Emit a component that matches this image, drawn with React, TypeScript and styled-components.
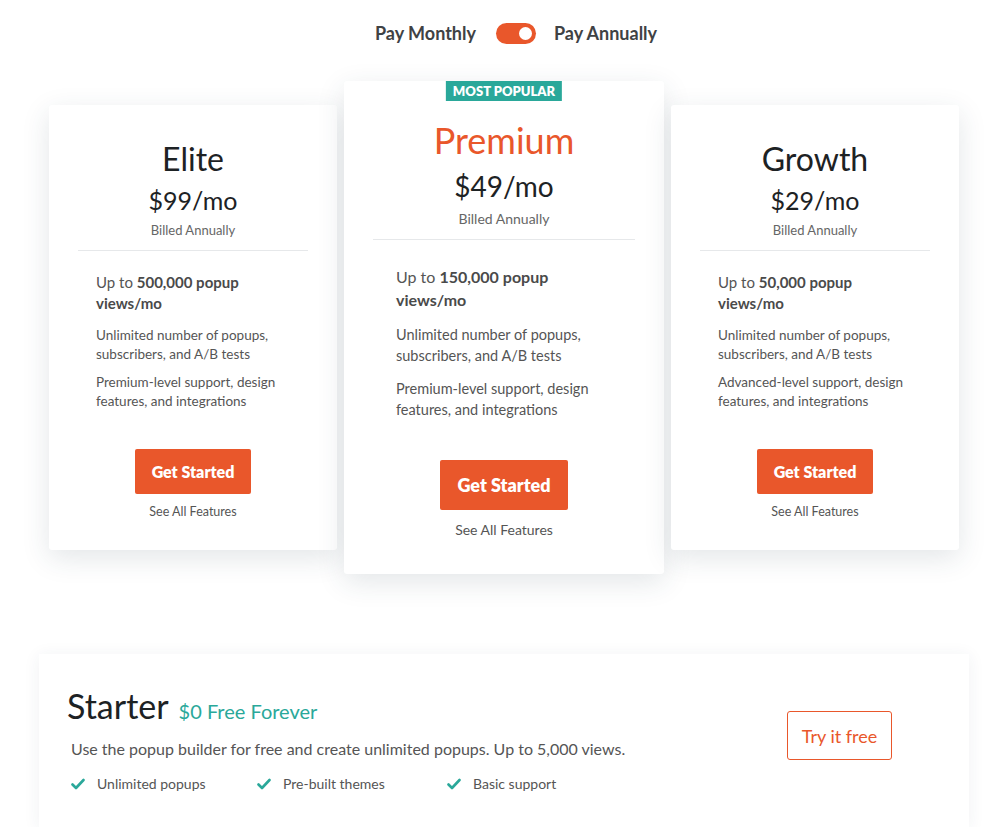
import React, { useState } from 'react';
import styled, { createGlobalStyle } from 'styled-components';

const GlobalStyle = createGlobalStyle`
  body {
    margin: 0;
    background: #fff;
    font-family: 'Lato', 'Open Sans', sans-serif;
    color: #222;
  }
`;

const ORANGE = '#e9572b';
const TEAL = '#2aa89a';

interface Plan {
  name: string;
  price: string;
  views: string;
  support: string;
  featured?: boolean;
}

const plans: Plan[] = [
  { name: 'Elite', price: '$99/mo', views: '500,000', support: 'Premium-level' },
  { name: 'Premium', price: '$49/mo', views: '150,000', support: 'Premium-level', featured: true },
  { name: 'Growth', price: '$29/mo', views: '50,000', support: 'Advanced-level' },
];

const CheckIcon = () => (
  <svg width="14" height="12" viewBox="0 0 14 12">
    <path d="M1.5 6.5 L5 10 L12.5 2" fill="none" stroke={TEAL} strokeWidth="2.6" strokeLinecap="round" strokeLinejoin="round" />
  </svg>
);

const App = () => {
  const [annual, setAnnual] = useState(true);

  return (
    <Page>
      <GlobalStyle />
      <ToggleRow>
        <ToggleLabel>Pay Monthly</ToggleLabel>
        <Switch $on={annual} onClick={() => setAnnual(!annual)}>
          <Knob $on={annual} />
        </Switch>
        <ToggleLabel>Pay Annually</ToggleLabel>
      </ToggleRow>

      <CardRow>
        {plans.map((p) => (
          <Card key={p.name} $featured={p.featured}>
            {p.featured && <Badge>MOST POPULAR</Badge>}
            <PlanName $featured={p.featured}>{p.name}</PlanName>
            <Price $featured={p.featured}>{p.price}</Price>
            <Billed $featured={p.featured}>Billed Annually</Billed>
            <Divider />
            <Features $featured={p.featured}>
              <Views $featured={p.featured}>
                Up to <b>{p.views} popup views/mo</b>
              </Views>
              <Feature $featured={p.featured}>Unlimited number of popups, subscribers, and A/B tests</Feature>
              <Feature $featured={p.featured}>{p.support} support, design features, and integrations</Feature>
            </Features>
            <StartButton $featured={p.featured}>Get Started</StartButton>
            <SeeAll $featured={p.featured}>See All Features</SeeAll>
          </Card>
        ))}
      </CardRow>

      <StarterCard>
        <StarterInfo>
          <StarterTitle>
            Starter <Free>$0 Free Forever</Free>
          </StarterTitle>
          <StarterText>Use the popup builder for free and create unlimited popups. Up to 5,000 views.</StarterText>
          <CheckList>
            <CheckItem $w={186}>
              <CheckIcon /> Unlimited popups
            </CheckItem>
            <CheckItem $w={190}>
              <CheckIcon /> Pre-built themes
            </CheckItem>
            <CheckItem $w={140}>
              <CheckIcon /> Basic support
            </CheckItem>
          </CheckList>
        </StarterInfo>
        <TryButton>Try it free</TryButton>
      </StarterCard>
    </Page>
  );
};

export default App;

const Page = styled.div`
  width: 1007px;
  padding-top: 22px;
  display: flex;
  flex-direction: column;
  align-items: center;
`;

const ToggleRow = styled.div`
  display: flex;
  align-items: center;
  height: 22px;
  margin-left: 25px;
`;

const ToggleLabel = styled.span`
  font-size: 18px;
  font-weight: 700;
  color: #3f4244;
`;

const Switch = styled.button<{ $on: boolean }>`
  width: 40px;
  height: 21px;
  margin: 0 18px 0 20px;
  border-radius: 11px;
  border: none;
  padding: 0;
  background: ${(p) => (p.$on ? ORANGE : '#ccc')};
  position: relative;
  cursor: pointer;
`;

const Knob = styled.span<{ $on: boolean }>`
  position: absolute;
  top: 4px;
  left: ${(p) => (p.$on ? '23px' : '4px')};
  width: 13px;
  height: 13px;
  border-radius: 50%;
  background: #fff;
`;

const CardRow = styled.div`
  display: flex;
  align-items: center;
  gap: 7px;
  margin-top: 37px;
  margin-left: 1px;
`;

const Card = styled.div<{ $featured?: boolean }>`
  position: relative;
  box-sizing: border-box;
  width: ${(p) => (p.$featured ? '320px' : '288px')};
  height: ${(p) => (p.$featured ? '493px' : '445px')};
  padding: ${(p) => (p.$featured ? '37px 0 0' : '34px 0 0')};
  background: #fff;
  border-radius: 3px;
  box-shadow: 0 8px 28px rgba(40, 60, 80, 0.13);
  display: flex;
  flex-direction: column;
  align-items: center;
`;

const Badge = styled.div`
  position: absolute;
  top: 0;
  left: 50%;
  transform: translateX(-50%);
  background: ${TEAL};
  color: #fff;
  font-size: 13px;
  font-weight: 800;
  padding: 1px 7px;
  line-height: 18px;
  white-space: nowrap;
`;

const PlanName = styled.div<{ $featured?: boolean }>`
  font-size: ${(p) => (p.$featured ? '36px' : '32px')};
  line-height: ${(p) => (p.$featured ? '44px' : '40px')};
  color: ${(p) => (p.$featured ? ORANGE : '#1d2224')};
  font-weight: 400;
`;

const Price = styled.div<{ $featured?: boolean }>`
  font-size: ${(p) => (p.$featured ? '28px' : '25px')};
  line-height: ${(p) => (p.$featured ? '36px' : '32px')};
  margin-top: ${(p) => (p.$featured ? '6px' : '5px')};
  color: #1d2224;
`;

const Billed = styled.div<{ $featured?: boolean }>`
  font-size: ${(p) => (p.$featured ? '14px' : '13px')};
  color: #666;
  margin-top: 6px;
`;

const Divider = styled.hr`
  align-self: stretch;
  margin: 12px 29px 0;
  border: none;
  border-top: 1px solid #e6e8ea;
`;

const Features = styled.div<{ $featured?: boolean }>`
  align-self: stretch;
  padding: ${(p) => (p.$featured ? '25px 52px 0' : '21px 47px 0')};
  height: ${(p) => (p.$featured ? '195px' : '177px')};
  display: flex;
  flex-direction: column;
  gap: ${(p) => (p.$featured ? '12px' : '9px')};
`;

const Views = styled.div<{ $featured?: boolean }>`
  font-size: ${(p) => (p.$featured ? '16px' : '15px')};
  line-height: ${(p) => (p.$featured ? '23px' : '21px')};
  margin-bottom: ${(p) => (p.$featured ? '1px' : '3px')};
  color: #555;
  b {
    font-weight: 700;
    color: #4a4a4a;
  }
`;

const Feature = styled.div<{ $featured?: boolean }>`
  font-size: ${(p) => (p.$featured ? '14.5px' : '13.5px')};
  line-height: ${(p) => (p.$featured ? '21px' : '19px')};
  color: #555;
`;

const StartButton = styled.button<{ $featured?: boolean }>`
  background: ${ORANGE};
  color: #fff;
  border: none;
  border-radius: 2px;
  font-family: inherit;
  font-weight: 800;
  font-size: ${(p) => (p.$featured ? '18px' : '16px')};
  width: ${(p) => (p.$featured ? '128px' : '116px')};
  height: ${(p) => (p.$featured ? '50px' : '45px')};
  cursor: pointer;
`;

const SeeAll = styled.div<{ $featured?: boolean }>`
  font-size: ${(p) => (p.$featured ? '14px' : '12.5px')};
  color: #555;
  margin-top: ${(p) => (p.$featured ? '11px' : '10px')};
`;

const StarterCard = styled.div`
  box-sizing: border-box;
  width: 930px;
  height: 173px;
  margin-top: 80px;
  margin-left: 1px;
  padding: 30px 77px 0 28px;
  background: #fff;
  box-shadow: 0 2px 16px rgba(40, 60, 80, 0.07);
  display: flex;
  justify-content: space-between;
  align-items: flex-start;
`;

const StarterInfo = styled.div`
  display: flex;
  flex-direction: column;
`;

const StarterTitle = styled.div`
  font-size: 34px;
  line-height: 44px;
  color: #1d2224;
`;

const Free = styled.span`
  font-size: 20px;
  color: ${TEAL};
  margin-left: 2px;
`;

const StarterText = styled.div`
  font-size: 16px;
  color: #555;
  margin-top: 6px;
  margin-left: 4px;
`;

const CheckList = styled.div`
  display: flex;
  margin-top: 17px;
  margin-left: 4px;
`;

const CheckItem = styled.div<{ $w: number }>`
  width: ${(p) => p.$w}px;
  display: flex;
  align-items: center;
  gap: 12px;
  font-size: 14px;
  color: #555;
`;

const TryButton = styled.button`
  margin-top: 27px;
  width: 105px;
  height: 49px;
  border: 1px solid ${ORANGE};
  border-radius: 3px;
  background: #fff;
  color: ${ORANGE};
  font-family: inherit;
  font-size: 18px;
  cursor: pointer;
`;
